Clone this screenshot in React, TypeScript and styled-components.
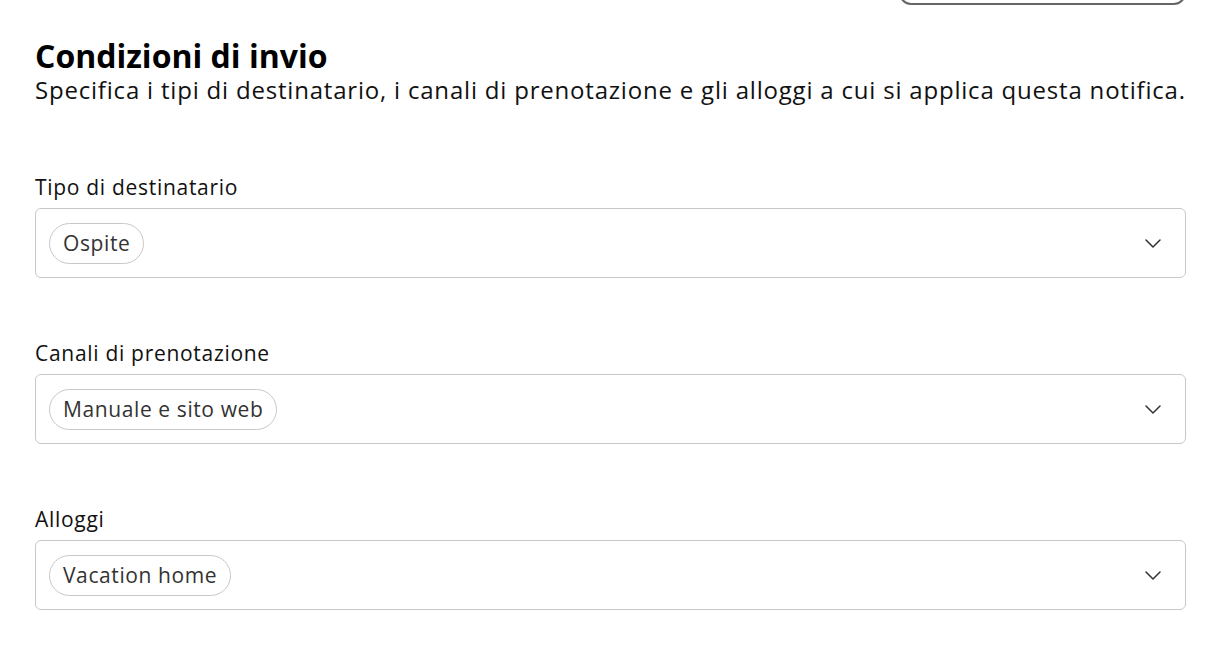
import React from "react";
import styled, { createGlobalStyle } from "styled-components";

const GlobalStyle = createGlobalStyle`
  html, body {
    margin: 0;
    padding: 0;
    background: #ffffff;
  }
  body {
    font-family: "Open Sans", "Noto Sans", sans-serif;
    color: #111111;
  }
`;

const Page = styled.div`
  width: 1230px;
  height: 648px;
  overflow: hidden;
  box-sizing: border-box;
  padding: 0 44px 0 35px;
`;

const TopBar = styled.div`
  height: 5px;
  display: flex;
  justify-content: flex-end;
  align-items: flex-end;
  overflow: hidden;
`;

const GhostButton = styled.button`
  flex: none;
  width: 287px;
  height: 44px;
  border: 2px solid #666666;
  border-radius: 12px;
  background: #ffffff;
`;

const Header = styled.header`
  margin-top: 33px;
`;

const Title = styled.h2`
  margin: 0;
  font-size: 32px;
  line-height: 36px;
  font-weight: 700;
  color: #000000;
`;

const Subtitle = styled.p`
  margin: 0;
  font-size: 24px;
  line-height: 32px;
  letter-spacing: 0.8px;
  white-space: nowrap;
  color: #111111;
`;

const Fields = styled.div`
  margin-top: 68px;
  display: flex;
  flex-direction: column;
  gap: 62px;
`;

const Field = styled.div`
  display: flex;
  flex-direction: column;
  gap: 8px;
`;

const Label = styled.label`
  font-size: 21px;
  line-height: 26px;
  letter-spacing: 0.7px;
  color: #111111;
`;

const SelectBox = styled.div`
  height: 70px;
  box-sizing: border-box;
  border: 1.5px solid #c8c8c8;
  border-radius: 6px;
  display: flex;
  align-items: center;
  justify-content: space-between;
  padding: 0 24px 0 13px;
`;

const Chip = styled.span`
  height: 41px;
  box-sizing: border-box;
  display: inline-flex;
  align-items: center;
  padding: 0 13px;
  border: 1.5px solid #c8c8c8;
  border-radius: 21px;
  font-size: 21px;
  letter-spacing: 0.6px;
  color: #333333;
`;

const Chevron = () => (
  <svg width="16" height="9" viewBox="0 0 16 9" fill="none">
    <path d="M1 1l7 7 7-7" stroke="#333333" strokeWidth="1.5" strokeLinecap="round" strokeLinejoin="round" />
  </svg>
);

const fields = [
  { label: "Tipo di destinatario", value: "Ospite" },
  { label: "Canali di prenotazione", value: "Manuale e sito web" },
  { label: "Alloggi", value: "Vacation home" },
];

export default function App() {
  return (
    <>
      <GlobalStyle />
      <Page>
        <TopBar>
          <GhostButton aria-hidden />
        </TopBar>
        <Header>
          <Title>Condizioni di invio</Title>
          <Subtitle>
            Specifica i tipi di destinatario, i canali di prenotazione e gli alloggi a cui si applica questa notifica.
          </Subtitle>
        </Header>
        <Fields>
          {fields.map((f) => (
            <Field key={f.label}>
              <Label>{f.label}</Label>
              <SelectBox>
                <Chip>{f.value}</Chip>
                <Chevron />
              </SelectBox>
            </Field>
          ))}
        </Fields>
      </Page>
    </>
  );
}
